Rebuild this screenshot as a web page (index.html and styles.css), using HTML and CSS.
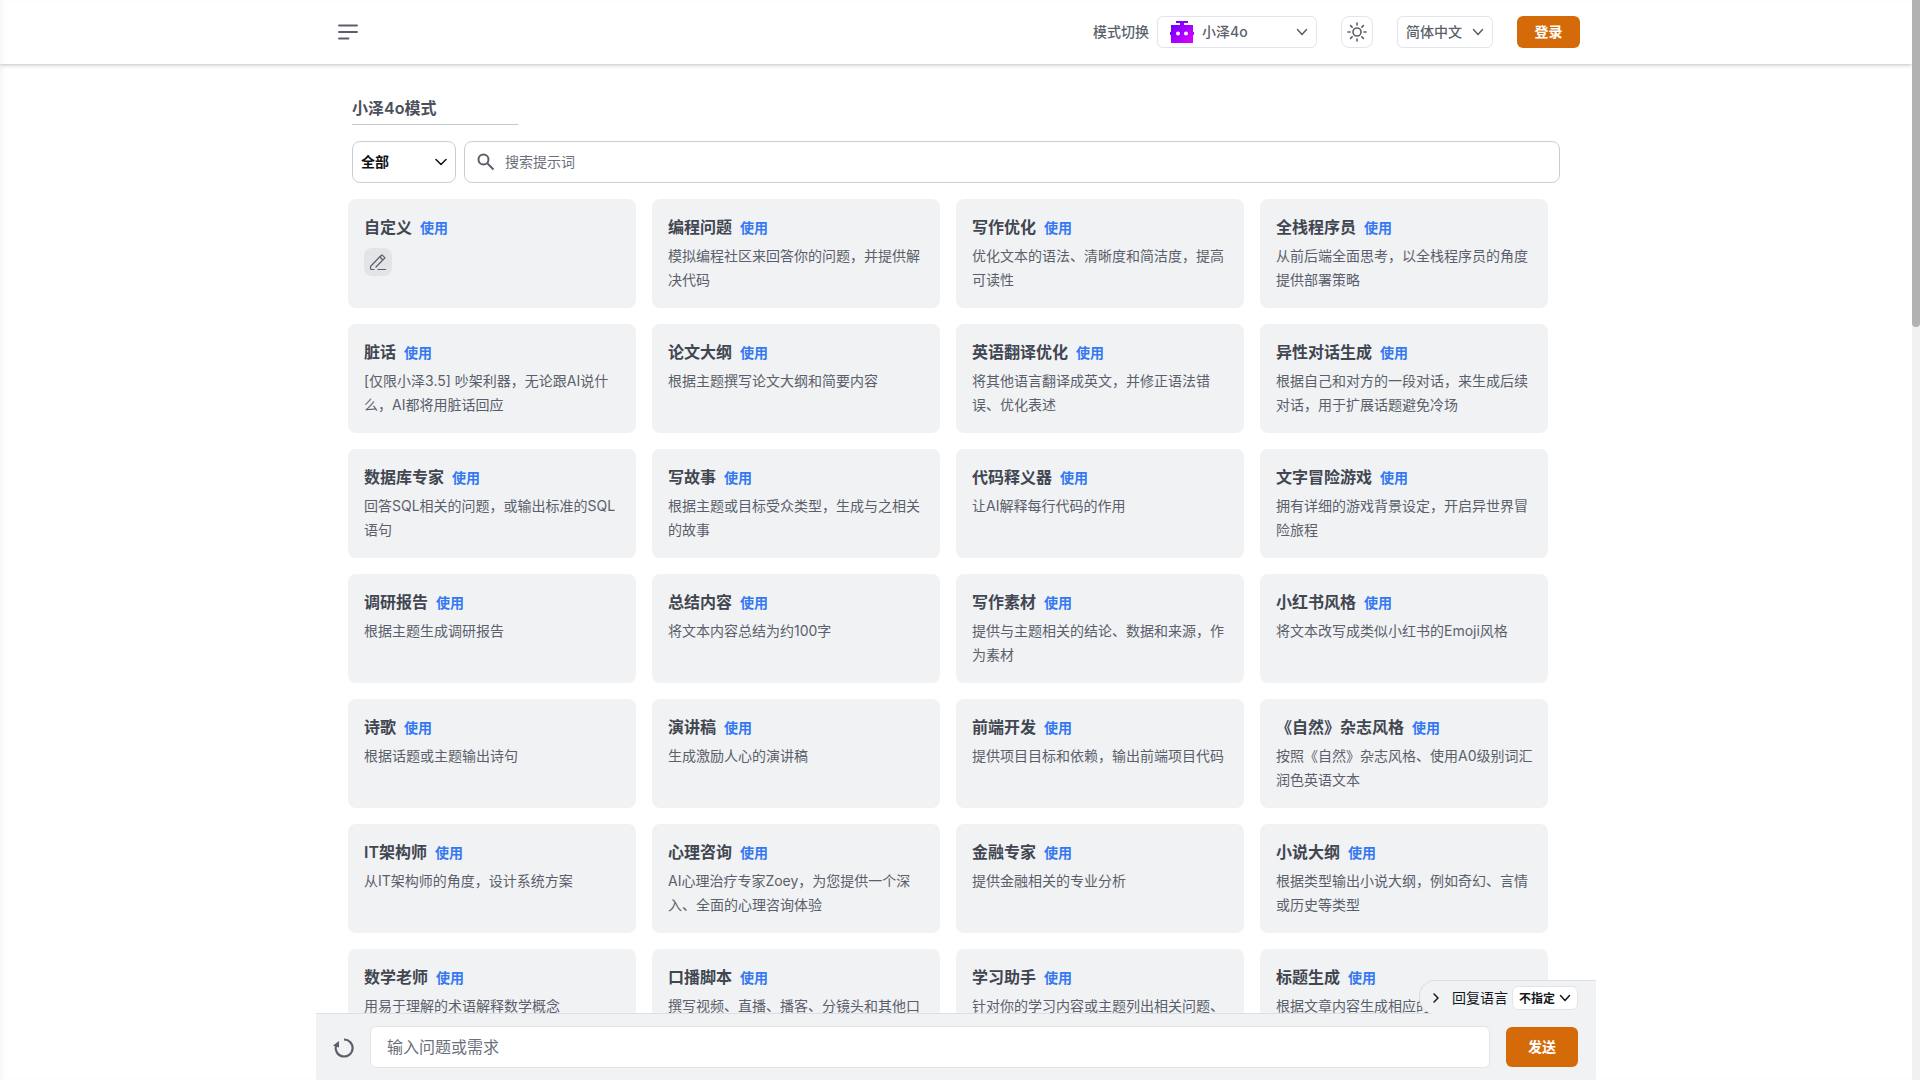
FILE: index.html
```html
<!DOCTYPE html>
<html lang="zh-CN">
<head>
<meta charset="utf-8">
<meta name="viewport" content="width=device-width, initial-scale=1">
<title>小泽4o</title>
<link rel="stylesheet" href="styles.css">
</head>
<body>
<div class="app">
  <div class="page">
    <header class="header">
      <div class="header-inner">
        <button class="menu-button" aria-label="菜单">
          <svg width="24" height="24" viewBox="0 0 24 24" fill="none" stroke="currentColor" stroke-width="1.8" stroke-linecap="round"><path d="M3 5.500h18M3 12h18M3 18.500h9.500"/></svg>
        </button>
        <div class="header-tools">
          <div class="mode">
            <label for="mode">模式切换</label>
            <div class="select mode-select">
              <svg class="robot" width="24" height="22" viewBox="0 0 24 22"><defs><linearGradient id="g" x1="0" x2="1" y1="0" y2="1"><stop offset="0.1" stop-color="#6a00ff"/><stop offset="1" stop-color="#e400ff"/></linearGradient></defs><path fill="url(#g)" fill-rule="evenodd" d="M6 0h12v2h-4v2h9v7h1v3h-1v8H1v-8H0v-3h1V4h9V2H6zM8 10.500a2 2 0 1 0 0 4 2 2 0 0 0 0-4zm8 0a2 2 0 1 0 0 4 2 2 0 0 0 0-4z"/></svg>
              <select id="mode"><option>小泽4o</option></select>
              <svg class="chevron" width="12" height="12" viewBox="0 0 12 12"><path d="M1.500 3.500l4.500 5 4.500-5"/></svg>
            </div>
          </div>
          <button class="theme-button" aria-label="主题">
            <svg width="20" height="20" viewBox="0 0 20 20" fill="none" stroke="currentColor" stroke-width="1.600" stroke-linecap="round"><circle cx="10" cy="10" r="4"/><path d="M10 1v2M10 17v2M1 10h2M17 10h2M3.600 3.600l1.500 1.500M14.900 14.900l1.500 1.500M3.600 16.400l1.500-1.500M14.900 5.100l1.500-1.500"/></svg>
          </button>
          <div class="select lang-select">
            <select aria-label="界面语言"><option>简体中文</option></select>
            <svg class="chevron" width="12" height="12" viewBox="0 0 12 12"><path d="M1.500 3.500l4.500 5 4.500-5"/></svg>
          </div>
          <button class="primary login">登录</button>
        </div>
      </div>
    </header>

    <main class="content">
      <h1 class="mode-title">小泽4o模式</h1>
      <div class="filters">
        <div class="select category">
          <select aria-label="分类"><option>全部</option></select>
          <svg class="chevron" width="12" height="12" viewBox="0 0 12 12"><path d="M1 3.500l5 5 5-5"/></svg>
        </div>
        <label class="search">
          <svg width="18" height="18" viewBox="0 0 18 18" fill="none" stroke="currentColor" stroke-width="2"><circle cx="6.500" cy="6.500" r="5"/><path d="M10.500 10.500l6 6"/></svg>
          <input type="text" placeholder="搜索提示词" aria-label="搜索提示词">
        </label>
      </div>

      <section class="cards">
        <article class="card"><h2>自定义</h2><a href="#">使用</a>
          <button class="edit" aria-label="编辑"><svg width="18" height="18" viewBox="0 0 18 18" fill="none" stroke="currentColor" stroke-width="1.200" stroke-linecap="round" stroke-linejoin="round"><path d="M9 16.500h7.500M5 16.500H2.500a1 1 0 0 1-1-1v-2L11.500 3M11 4l2-2.200 3 3-2.200 2.200zM13.800 7L7 14"/></svg></button></article>
        <article class="card"><h2>编程问题</h2><a href="#">使用</a><p>模拟编程社区来回答你的问题，并提供解决代码</p></article>
        <article class="card"><h2>写作优化</h2><a href="#">使用</a><p>优化文本的语法、清晰度和简洁度，提高可读性</p></article>
        <article class="card"><h2>全栈程序员</h2><a href="#">使用</a><p>从前后端全面思考，以全栈程序员的角度提供部署策略</p></article>
        <article class="card"><h2>脏话</h2><a href="#">使用</a><p>[仅限小泽3.5] 吵架利器，无论跟AI说什么，AI都将用脏话回应</p></article>
        <article class="card"><h2>论文大纲</h2><a href="#">使用</a><p>根据主题撰写论文大纲和简要内容</p></article>
        <article class="card"><h2>英语翻译优化</h2><a href="#">使用</a><p>将其他语言翻译成英文，并修正语法错误、优化表述</p></article>
        <article class="card"><h2>异性对话生成</h2><a href="#">使用</a><p>根据自己和对方的一段对话，来生成后续对话，用于扩展话题避免冷场</p></article>
        <article class="card"><h2>数据库专家</h2><a href="#">使用</a><p>回答SQL相关的问题，或输出标准的SQL语句</p></article>
        <article class="card"><h2>写故事</h2><a href="#">使用</a><p>根据主题或目标受众类型，生成与之相关的故事</p></article>
        <article class="card"><h2>代码释义器</h2><a href="#">使用</a><p>让AI解释每行代码的作用</p></article>
        <article class="card"><h2>文字冒险游戏</h2><a href="#">使用</a><p>拥有详细的游戏背景设定，开启异世界冒险旅程</p></article>
        <article class="card"><h2>调研报告</h2><a href="#">使用</a><p>根据主题生成调研报告</p></article>
        <article class="card"><h2>总结内容</h2><a href="#">使用</a><p>将文本内容总结为约100字</p></article>
        <article class="card"><h2>写作素材</h2><a href="#">使用</a><p>提供与主题相关的结论、数据和来源，作为素材</p></article>
        <article class="card"><h2>小红书风格</h2><a href="#">使用</a><p>将文本改写成类似小红书的Emoji风格</p></article>
        <article class="card"><h2>诗歌</h2><a href="#">使用</a><p>根据话题或主题输出诗句</p></article>
        <article class="card"><h2>演讲稿</h2><a href="#">使用</a><p>生成激励人心的演讲稿</p></article>
        <article class="card"><h2>前端开发</h2><a href="#">使用</a><p>提供项目目标和依赖，输出前端项目代码</p></article>
        <article class="card"><h2>《自然》杂志风格</h2><a href="#">使用</a><p>按照《自然》杂志风格、使用A0级别词汇润色英语文本</p></article>
        <article class="card"><h2>IT架构师</h2><a href="#">使用</a><p>从IT架构师的角度，设计系统方案</p></article>
        <article class="card"><h2>心理咨询</h2><a href="#">使用</a><p>AI心理治疗专家Zoey，为您提供一个深入、全面的心理咨询体验</p></article>
        <article class="card"><h2>金融专家</h2><a href="#">使用</a><p>提供金融相关的专业分析</p></article>
        <article class="card"><h2>小说大纲</h2><a href="#">使用</a><p>根据类型输出小说大纲，例如奇幻、言情或历史等类型</p></article>
        <article class="card"><h2>数学老师</h2><a href="#">使用</a><p>用易于理解的术语解释数学概念</p></article>
        <article class="card"><h2>口播脚本</h2><a href="#">使用</a><p>撰写视频、直播、播客、分镜头和其他口</p></article>
        <article class="card"><h2>学习助手</h2><a href="#">使用</a><p>针对你的学习内容或主题列出相关问题、</p></article>
        <article class="card"><h2>标题生成</h2><a href="#">使用</a><p>根据文章内容生成相应的</p></article>
      </section>
    </main>

    <footer class="composer">
      <div class="reply-lang">
        <svg class="chevron" width="12" height="12" viewBox="0 0 12 12"><path d="M4 2l4 4-4 4"/></svg>
        <label for="reply">回复语言</label>
        <div class="select reply-select">
          <select id="reply"><option>不指定</option></select>
          <svg class="chevron" width="12" height="12" viewBox="0 0 12 12"><path d="M1.500 3.500l4.500 5 4.500-5"/></svg>
        </div>
      </div>
      <button class="reset" aria-label="重置">
        <svg width="22" height="22" viewBox="0 0 22 22" fill="none" stroke="currentColor" stroke-width="2.200"><path d="M12 3.500a8.500 8.500 0 1 1-8 6"/><path d="M1 9.500L7 5v6.500z" fill="currentColor" stroke="none"/></svg>
      </button>
      <input class="prompt" type="text" placeholder="输入问题或需求" aria-label="输入问题或需求">
      <button class="primary send">发送</button>
    </footer>
  </div>
  <div class="scrollbar"><div class="thumb"></div></div>
</div>
</body>
</html>
```
FILE: styles.css
```css
* { box-sizing: border-box; }

body {
  margin: 0;
  background: #fff;
  color: #5b5f6b;
  font: 14px/24px Inter, "Noto Sans CJK SC", sans-serif;
}

button, input, select { font: inherit; color: inherit; }
button { border: 0; background: none; padding: 0; }
h1, h2, p { margin: 0; }
svg { flex: none; overflow: visible; }

.app {
  display: flex;
  height: 100vh;
  box-shadow: inset 4px 0 6px -3px rgba(0, 0, 0, .06);
}

.page {
  flex: 1;
  min-width: 0;
  display: flex;
  flex-direction: column;
  overflow: hidden;
}

.scrollbar { width: 8px; background: #f1f1f1; }
.thumb { height: 30.3%; background: #b1b1b1; border-radius: 0 0 4px 4px; }

/* Header */
.header {
  flex: none;
  height: 64px;
  box-shadow: 0 1px 4px rgba(0, 0, 0, .25);
}

.header-inner {
  max-width: 1280px;
  height: 100%;
  margin: 0 auto;
  padding: 0 16px;
  display: flex;
  align-items: center;
  justify-content: space-between;
}

.menu-button { height: 24px; padding: 0 4px; }
.header-tools { display: flex; align-items: center; gap: 24px; font-weight: 500; }
.mode { display: flex; align-items: center; gap: 8px; }

.select {
  display: flex;
  align-items: center;
  position: relative;
  height: 32px;
  border: 1px solid #e1e4e8;
  border-radius: 6px;
  background: #fff;
}

.select select {
  appearance: none;
  width: 100%;
  height: 100%;
  border: 0;
  padding: 0 8px;
  background: none;
  outline: 0;
}

.chevron { fill: none; stroke: currentColor; stroke-width: 1.5; stroke-linecap: round; stroke-linejoin: round; }
.select .chevron { position: absolute; right: 8px; pointer-events: none; }

.mode-select { width: 160px; padding-left: 12px; }
.lang-select { width: 96px; }

.theme-button {
  width: 32px;
  height: 32px;
  display: grid;
  place-items: center;
  border: 1px solid #e1e4e8;
  border-radius: 8px;
}

.primary { background: #d46b08; color: #fff; border-radius: 6px; font-weight: 700; }
.login { width: 63px; height: 32px; }

/* Prompt list */
.content {
  flex: 1;
  min-height: 0;
  overflow: hidden;
  width: 100%;
  max-width: 1280px;
  margin: 0 auto;
  padding: 28px 48px 0 32px;
}

.mode-title {
  width: 166px;
  height: 33px;
  margin-left: 4px;
  border-bottom: 1px solid #c5c9ce;
  color: #4b505b;
  font-size: 16px;
  line-height: 32px;
  font-weight: 600;
}

.filters { display: flex; gap: 8px; margin: 16px -12px 16px 4px; }
.category, .search { height: 42px; border: 1px solid #c9ced3; border-radius: 8px; }
.category { width: 104px; color: #111; font-weight: 600; }

.search {
  flex: 1;
  display: flex;
  align-items: center;
  gap: 10px;
  padding: 0 12px;
}

.search input { flex: 1; border: 0; padding: 0; outline: 0; background: none; }
input::placeholder { color: #6b6f7a; opacity: 1; }

.cards { display: grid; grid-template-columns: repeat(4, 1fr); grid-auto-rows: 109px; gap: 16px; }
.card { padding: 16px 12px 16px 16px; border-radius: 8px; background: #f0f2f4; }
.card h2 { display: inline-block; margin-right: 8px; color: #414651; font-size: 16px; line-height: 24px; font-weight: 600; }
.card a { color: #3478f2; font-weight: 600; text-decoration: none; }
.card p { margin-top: 4px; }

.edit {
  display: grid;
  place-items: center;
  width: 28px;
  height: 28px;
  margin-top: 8px;
  border-radius: 8px;
  background: #e2e4e8;
}

/* Message bar */
.composer {
  flex: none;
  position: relative;
  width: 100%;
  max-width: 1280px;
  height: 67px;
  margin: 0 auto;
  padding: 0 18px 0 16px;
  display: flex;
  align-items: center;
  gap: 16px;
  border-top: 1px solid #dcdfe3;
  background: #f0f2f4;
}

.reset { display: flex; }

.prompt {
  flex: 1;
  height: 42px;
  padding: 0 16px;
  border: 1px solid #e1e4e8;
  border-radius: 6px;
  background: #fff;
  font-size: 16px;
  outline: 0;
}

.send { width: 72px; height: 40px; }

.reply-lang {
  position: absolute;
  right: 0;
  bottom: 100%;
  height: 34px;
  padding: 0 18px 0 10px;
  display: flex;
  align-items: center;
  border: 1px solid #dcdfe3;
  border-width: 1px 0 0 1px;
  border-radius: 16px 0 0 16px;
  background: #f0f2f4;
  color: #16181d;
}

.reply-lang label { margin: 0 4px 0 10px; }
.reply-select { width: 66px; height: 24px; font-size: 12px; font-weight: 600; }
.reply-select select { padding: 0 6px; }
.select.reply-select .chevron { right: 6px; }
```
